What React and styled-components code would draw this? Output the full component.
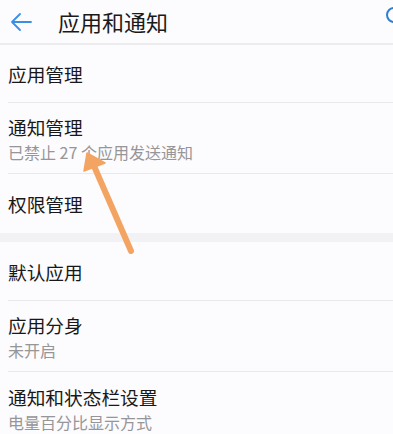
import styled, { createGlobalStyle } from "styled-components";

const GlobalStyle = createGlobalStyle`
  html, body {
    margin: 0;
    padding: 0;
    background: #fcfbfd;
    overflow: hidden;
  }
  body {
    font-family: "Noto Sans CJK SC", "Noto Sans", sans-serif;
  }
`;

const Page = styled.div`
  position: relative;
  width: 393px;
  height: 434px;
  overflow: hidden;
  background: #fcfbfd;
`;

const Header = styled.div`
  height: 43px;
  display: flex;
  align-items: center;
  border-bottom: 2px solid #ececee;
  position: relative;
`;

const BackButton = styled.div`
  width: 58px;
  display: flex;
  align-items: center;
  padding-left: 9px;
  box-sizing: border-box;
`;

const Title = styled.h1`
  margin: 0;
  font-size: 22px;
  font-weight: 400;
  color: #1a1a1a;
  margin-top: -2px;
`;

const SearchPeek = styled.div`
  position: absolute;
  right: -9px;
  top: 7px;
  width: 12px;
  height: 12px;
  border: 2px solid #2f7fd0;
  border-radius: 50%;
`;

const List = styled.div`
  display: flex;
  flex-direction: column;
`;

const Row = styled.div`
  height: ${(p) => (p.$double ? "71px" : p.$first ? "58px" : "59px")};
  margin-left: 8px;
  display: flex;
  flex-direction: column;
  justify-content: center;
  border-bottom: ${(p) => (p.$last ? "none" : "1px solid #e9e9eb")};
  box-sizing: border-box;
`;

const RowTitle = styled.div`
  font-size: 18.7px;
  color: #181818;
  line-height: 25px;
`;

const RowSub = styled.div`
  font-size: 16px;
  color: #969698;
  line-height: 20px;
  margin-top: 3px;
`;

const SectionGap = styled.div`
  height: 9px;
  background: #f2f2f4;
`;

const Pointer = styled.svg`
  position: absolute;
  left: 0;
  top: 0;
  pointer-events: none;
`;

const section1 = [
  { title: "应用管理", first: true },
  { title: "通知管理", sub: "已禁止 27 个应用发送通知" },
  { title: "权限管理", last: true },
];

const section2 = [
  { title: "默认应用" },
  { title: "应用分身", sub: "未开启" },
  { title: "通知和状态栏设置", sub: "电量百分比显示方式", last: true },
];

function Item({ title, sub, first, last }) {
  return (
    <Row $double={!!sub} $first={first} $last={last}>
      <RowTitle>{title}</RowTitle>
      {sub && <RowSub>{sub}</RowSub>}
    </Row>
  );
}

export default function App() {
  return (
    <Page>
      <GlobalStyle />
      <Header>
        <BackButton>
          <svg width="24" height="20" viewBox="0 0 24 20" fill="none">
            <path
              d="M22 10H3M11 2L3 10L11 18"
              stroke="#3a8ee6"
              strokeWidth="1.8"
              strokeLinecap="round"
              strokeLinejoin="round"
            />
          </svg>
        </BackButton>
        <Title>应用和通知</Title>
        <SearchPeek />
      </Header>
      <List>
        {section1.map((it) => (
          <Item key={it.title} {...it} />
        ))}
        <SectionGap />
        {section2.map((it) => (
          <Item key={it.title} {...it} />
        ))}
      </List>
      <Pointer width="393" height="434" viewBox="0 0 393 434">
        <path
          d="M131 251L94 166"
          stroke="#f3a462"
          strokeWidth="6"
          strokeLinecap="round"
        />
        <path d="M87 153L105 163L84 171Z" fill="#f3a462" strokeLinejoin="round" stroke="#f3a462" strokeWidth="1.5" />
      </Pointer>
    </Page>
  );
}
